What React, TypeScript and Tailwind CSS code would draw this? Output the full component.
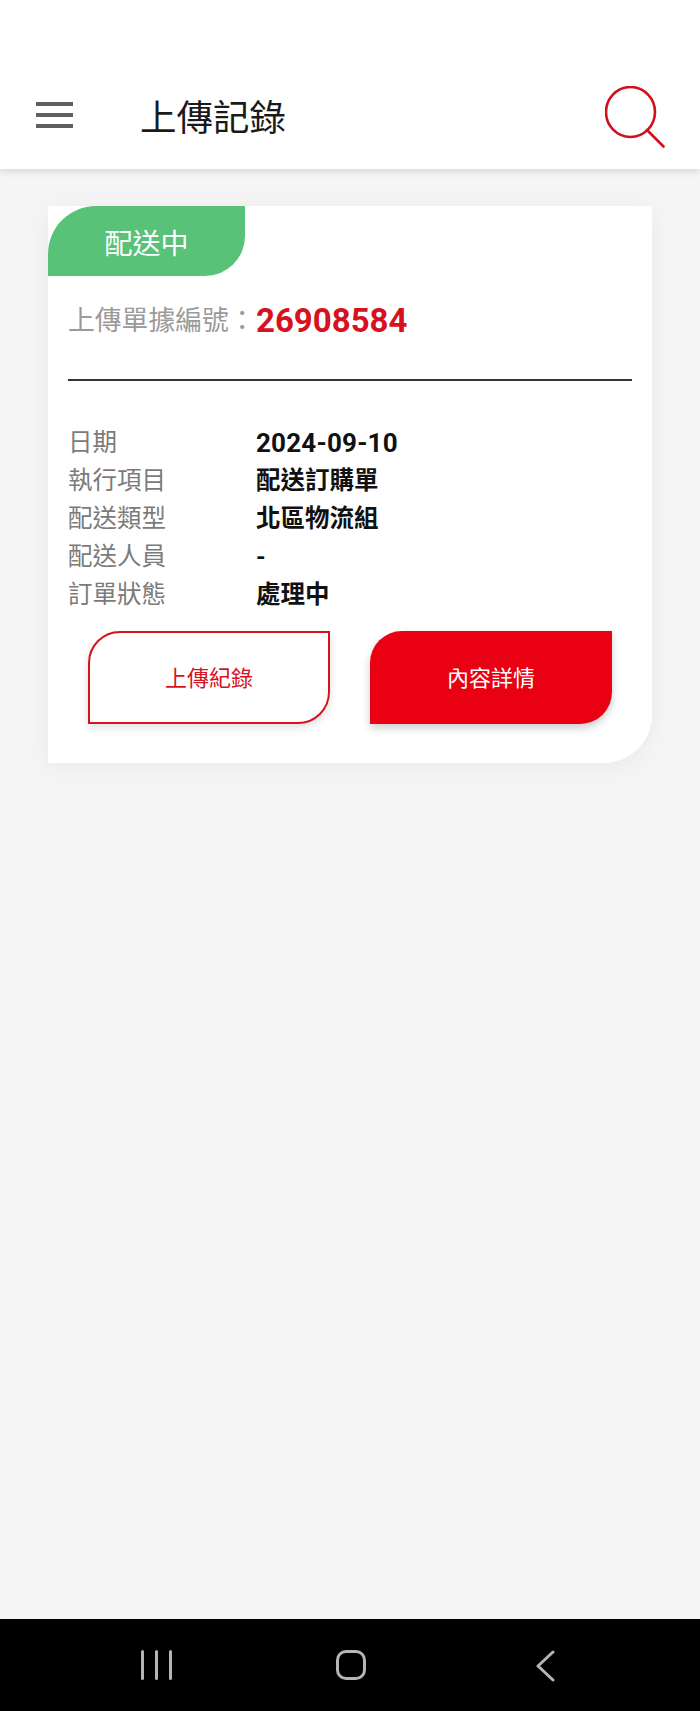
import React from 'react';

const FONT = "font-['Roboto','Noto_Sans_CJK_TC',sans-serif]";

const rows = [
  { label: '日期', value: '2024-09-10' },
  { label: '執行項目', value: '配送訂購單' },
  { label: '配送類型', value: '北區物流組' },
  { label: '配送人員', value: '-' },
  { label: '訂單狀態', value: '處理中' },
];

const SearchIcon = () => (
  <svg width="60" height="62" viewBox="0 0 60 62" fill="none" stroke="#d0101c" strokeWidth="2.6" strokeLinecap="round">
    <ellipse cx="25.5" cy="26" rx="24.5" ry="25" />
    <path d="M42 44 L58.5 60.5" />
  </svg>
);

const App: React.FC = () => {
  return (
    <div className={`${FONT} flex h-[1711px] w-[700px] flex-col overflow-hidden bg-[#f5f5f5]`}>
      <header className="z-10 flex h-[169px] shrink-0 items-center bg-white pl-9 pr-[35px] pt-[67px] shadow-[0_2px_8px_rgba(0,0,0,0.14)]">
        <div className="-mt-[6px] flex w-[37px] flex-col gap-[7.5px]">
          <div className="h-[3.5px] bg-[#5f5f5f]" />
          <div className="h-[3.5px] bg-[#5f5f5f]" />
          <div className="h-[3.5px] bg-[#5f5f5f]" />
        </div>
        <h1 className="ml-[67px] mt-[2px] text-[36.5px] leading-none font-normal text-[#1a1a1a]">上傳記錄</h1>
        <div className="ml-auto -mt-[2px]">
          <SearchIcon />
        </div>
      </header>

      <main className="flex-1 pl-[48px] pt-[37px]">
        <div className="h-[557px] w-[604px] rounded-br-[48px] bg-white shadow-[0_4px_24px_rgba(0,0,0,0.05)]">
          <div className="flex h-[70px] w-[197px] items-center justify-center rounded-tl-[48px] rounded-br-[40px] bg-[#57c278] pt-[7px] text-[28px] text-white">
            配送中
          </div>

          <div className="mx-5 flex h-[105px] items-start border-b-2 border-[#333333] pt-[25px]">
            <span className="w-[188px] whitespace-nowrap text-[26.8px] leading-[40px] text-[#9a9a9a]">上傳單據編號：</span>
            <span className="text-[33px] leading-[40px] font-bold text-[#d7121f]">26908584</span>
          </div>

          <div className="mx-5 mt-[43px] flex flex-col">
            {rows.map((row) => (
              <div key={row.label} className="flex h-[38px] items-center text-[24.5px]">
                <span className="w-[188px] text-[#7b7b7b]">{row.label}</span>
                <span className={row.value === '2024-09-10' ? 'text-[26px] font-bold tracking-[0.2px] text-[#111111]' : 'font-bold text-[#111111]'}>{row.value}</span>
              </div>
            ))}
          </div>

          <div className="mt-[17px] flex gap-[40px] pl-[40px]">
            <button className="flex h-[93px] w-[242px] items-center justify-center rounded-tl-[32px] rounded-br-[32px] border-2 border-[#d7121f] bg-white pt-[2px] text-[22px] text-[#d7121f] shadow-[0_4px_8px_rgba(0,0,0,0.12)]">
              上傳紀錄
            </button>
            <button className="flex h-[93px] w-[242px] items-center justify-center rounded-tl-[32px] rounded-br-[32px] bg-[#e90012] pt-[2px] text-[22px] text-white shadow-[0_4px_8px_rgba(0,0,0,0.2)]">
              內容詳情
            </button>
          </div>
        </div>
      </main>

      <nav className="flex h-[92px] shrink-0 items-start bg-black pt-[31px]">
        <div className="ml-[141px] flex h-[30px] gap-[11px]">
          <div className="w-[3px] rounded-full bg-[#b5b5b5]" />
          <div className="w-[3px] rounded-full bg-[#b5b5b5]" />
          <div className="w-[3px] rounded-full bg-[#b5b5b5]" />
        </div>
        <div className="ml-[164px] h-[30px] w-[30px] rounded-[10px] border-[3px] border-[#b5b5b5]" />
        <svg className="ml-[169px]" width="20" height="32" viewBox="0 0 20 32" fill="none" stroke="#b5b5b5" strokeWidth="3" strokeLinecap="round" strokeLinejoin="round">
          <path d="M18 2 L3 16 L18 30" />
        </svg>
      </nav>
    </div>
  );
};

export default App;
